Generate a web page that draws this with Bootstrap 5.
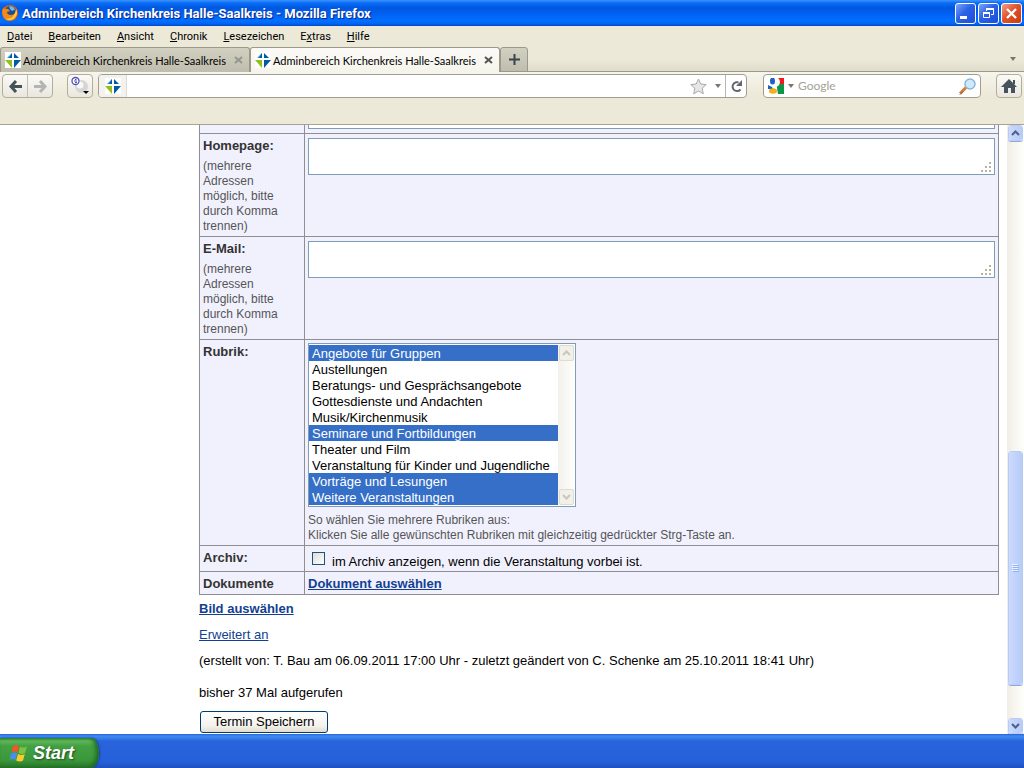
<!DOCTYPE html>
<html lang="de">
<head>
<meta charset="utf-8">
<meta name="viewport" content="width=device-width, initial-scale=1">
<title>Adminbereich Kirchenkreis Halle-Saalkreis</title>
<link href="https://cdn.jsdelivr.net/npm/bootstrap@5.3.0/dist/css/bootstrap.min.css" rel="stylesheet">
<style>
  :root { --chrome: #ece9d8; --line: #a5a391; --cell: #8e8e95; --field: #7f9db9; }
  body { font-family: "Liberation Sans", Arial, sans-serif; font-size: 13px; line-height: 16px; color: #000; background: #fff; }
  button { padding: 0; border: 0; background: none; }
  svg { display: block; flex: none; }
  .ui-text { font-family: Lato, Tahoma, sans-serif; font-size: 11px; }

  .title-bar { height: 26px; padding: 0 2px; background: linear-gradient(#3c94ff 0, #0a6cf7 3px, #0058e0 8px, #0061f5 14px, #0070ff 21px, #0064f0 24px, #0043c4 26px); }
  .title-text { padding-top: 1px; font-family: Roboto, "Trebuchet MS", sans-serif; font-size: 13px; font-weight: 700; color: #fff; text-shadow: 1px 1px 1px #0a1f8a; }
  .win-btns { gap: 2px; }
  .win-btn { width: 21px; height: 21px; border: 1px solid #fff; border-radius: 3px; background: linear-gradient(135deg, #7da4f7, #2a62e6 45%, #1d4fd8); }
  .win-btn.win-close { background: linear-gradient(135deg, #f0a08a, #e0532c 45%, #c93a10); }

  .menu-bar { height: 21px; padding-left: 7px; gap: 16px; background: var(--chrome); font-family: Roboto, Tahoma, sans-serif; }
  .menu-bar button { color: #000; }

  .tab-row { height: 25px; background: linear-gradient(#ece9d8 12px, #dfdccb); border-bottom: 1px solid #9b9987; }
  .tab-item { width: 250px; height: 25px; padding: 0 6px 0 4px; gap: 2px; border: 1px solid #9b9987; border-bottom: 0; border-radius: 3px 3px 0 0; background: linear-gradient(#d2d0c1, #bfbdae); color: #000; }
  .tab-item.current { background: linear-gradient(#fbfaf7, #f5f4ec); }
  .tab-label { padding-top: 2px; }
  .tab-add { width: 28px; height: 25px; border: 1px solid #9b9987; border-radius: 3px 3px 0 0; background: linear-gradient(#d2d0c1, #bfbdae); }

  .tool-bar { height: 53px; padding: 2px 2px 0; background: linear-gradient(#f7f5ec, #ece9d8 24px); border-bottom: 1px solid var(--line); }
  .tool-box { height: 24px; border: 1px solid #b1aea0; border-radius: 4px; background: linear-gradient(#fbfaf7, #e9e7dd); overflow: hidden; }
  .tool-box button { height: 22px; }
  .tool-box.field-box { background: #fff; border-color: #a09e92; }
  .tool-box input { min-width: 0; border: 0; outline: 0; padding: 0; background: none; font-size: 12px; }
  .tool-box input::placeholder { color: #a5a293; opacity: 1; }
  .nav-pair { width: 51px; }
  .helper-box { margin: 0 5px 0 14px; }
  .nav-pair button + button { border-left: 1px solid #c3c0b3; }
  .site-id { width: 28px; height: 22px; background: #f3f2ee; border-right: 1px solid #dddbd2; }
  .reload-btn { width: 21px; border-left: 1px solid #b9b7ac; }
  .search-box { width: 218px; }
  .home-box { margin-left: 15px; }
  .lens-box { width: 26px; }

  .page-pane { padding: 0 8px 0 199px; overflow: hidden; }
  .form-grid { width: 100%; border-collapse: collapse; }
  .form-grid th, .form-grid td { border: 1px solid var(--cell); background: #f1f1fe; padding: 3px 3px 2px; vertical-align: top; font-weight: 400; }
  .form-grid th { width: 105px; color: #555; font-size: 12px; line-height: 15px; }
  .form-grid tr:first-child > * { border-top: 0; padding-top: 0; height: 8px; }
  .form-grid tr:first-child > td { padding-bottom: 4px; }
  .field-name { display: block; font-size: 13px; line-height: 16px; font-weight: 700; color: #333; }
  .hint { font-size: 12px; line-height: 15px; color: #555; padding-top: 5px; }
  .list-wrap + .hint { padding-top: 6px; }
  .form-grid .last-rows > * { padding: 4px 3px 2px; }
  .text-area { display: block; width: 100%; height: 37px; border: 1px solid var(--field); background: #fff; resize: none; overflow: hidden; outline: 0; padding: 2px; }
  .text-area.cut { height: 4px; border-top: 0; padding: 0; }
  .grip { position: absolute; right: 4px; bottom: 3px; }
  .list-wrap { width: 268px; height: 164px; border: 1px solid var(--field); background: #fff; padding: 1px 0; }
  .list-wrap select { display: block; width: 249px; height: 160px; border: 0; padding: 0; outline: 0; overflow: hidden; font-size: 13px; line-height: 16px; color: #000; background: #fff; scrollbar-width: none; border-radius: 0; }
  .list-wrap option { height: 16px; min-height: 16px; line-height: 15px; padding: 1px 3px 0; }
  .list-wrap option:checked { background: #316ac5 linear-gradient(#356fc8, #356fc8); color: #fff; -webkit-text-fill-color: #fff; }
  .list-bar { width: 17px; background: linear-gradient(90deg, #f3f1ec, #fefefb); }
  .list-bar span { height: 16px; margin: 0 1px; border: 1px solid #dedbd0; border-radius: 2px; background: #f1f0e9; }
  .tick-box { appearance: none; width: 13px; height: 13px; margin: 2px 7px 0 4px; border: 1px solid #1c5180; background: linear-gradient(135deg, #dcdcd7, #fff); }
  .tick-row { height: 19px; }
  a { color: #123f92; }
  .link-strong { font-weight: 700; }
  .after-form { padding-top: 6px; }
  .after-form p { margin: 0 0 10px; }
  .after-form .stamp { margin-bottom: 16px; }
  .save-btn { display: block; height: 22px; width: 128px; margin-left: 1px; border: 1px solid #003c74; border-radius: 3px; background: linear-gradient(#fff, #f3f2ec 70%, #e0dccf); font-size: 13px; }

  .scroll-col { width: 17px; background: linear-gradient(90deg, #f0eee6, #fefefb); padding: 0 1px; }
  .scroll-col button, .scroll-thumb { border: 1px solid #fff; outline: 1px solid #b9cbf3; outline-offset: -1px; border-radius: 3px; background: linear-gradient(90deg, #cbdafd, #b7cbfa); box-shadow: 0 1px 0 #8fa9dc; }
  .scroll-col button { height: 16px; }
  .track-before { flex: 311 0 0; }
  .scroll-thumb { flex: 233 0 0; }
  .track-after { flex: 33 0 0; }

  .task-bar { height: 34px; background: linear-gradient(#2560d8 0, #3f8cee 2px, #3a80ea 4px, #2a64dc 7px, #2560da 28px, #1e4fbd); }
  .start-btn { width: 99px; height: 30px; padding-left: 9px; border-radius: 0 8px 8px 0 / 0 15px 15px 0; background: linear-gradient(#2f8a2f 0, #5fb85c 3px, #43a043 8px, #3a983a 22px, #2c7a2c); box-shadow: inset -3px -1px 4px #1f6a22, 1px 0 2px #17409e; font-family: "Liberation Sans", sans-serif; font-size: 18px; font-weight: 700; font-style: italic; color: #fff; text-shadow: 1px 1px 2px #1d4a1d; }
</style>
</head>
<body class="d-flex flex-column vh-100 overflow-hidden">
<svg width="0" height="0" class="position-absolute" aria-hidden="true">
  <symbol id="site-mark" viewBox="0 0 16 16">
    <rect width="16" height="16" fill="#fff"/>
    <path d="M7 1v5H2z" fill="#3a9ad0"/><path d="M7 1v5H4z" fill="#005ba5"/>
    <path d="M9 1v5h5z" fill="#005ba5"/><path d="M0 8h7v8z" fill="#93c01f"/><path d="M9 8h7l-7 8z" fill="#005ba5"/>
  </symbol>
  <symbol id="drop" viewBox="0 0 6 4"><path d="M0 0h6L3 4z" fill="#77776f"/></symbol>
</svg>

<header class="title-bar d-flex align-items-center flex-shrink-0">
  <svg width="16" height="16" viewBox="0 0 16 16"><circle cx="8" cy="8" r="8" fill="#e2600b"/><circle cx="8.500" cy="6.500" r="5.500" fill="#1d4f94"/><path d="M7 1.500q4-1 6 3L10 6 8 4z" fill="#79b8e6"/><path d="M1 2q0 2 2 2 3-1 4 1l1 1-3 1q0 3 4 3 4 0 5-4 2 6-3 9-6 2-9-2-3-5-1-10z" fill="#f38a18"/><path d="M14 4q3 6-3 10-4 2-7 0 9 0 10-10z" fill="#ffd03c"/></svg>
  <span class="title-text ms-1 me-auto text-nowrap">Adminbereich Kirchenkreis Halle-Saalkreis - Mozilla Firefox</span>
  <div class="win-btns d-flex">
    <button class="win-btn" type="button" aria-label="Minimieren"><svg width="19" height="19"><path d="M4 12h7v3H4z" fill="#fff"/></svg></button>
    <button class="win-btn" type="button" aria-label="Verkleinern"><svg width="19" height="19" fill="none" stroke="#fff"><path d="M7.500 7V4.500h7v6H12M4.500 8.500h6v5h-6z"/><path d="M7 5h8M4 9h7" stroke-width="2"/></svg></button>
    <button class="win-btn win-close" type="button" aria-label="Schließen"><svg width="19" height="19"><path d="M5 5l9 9M14 5l-9 9" stroke="#fff" stroke-width="2.400"/></svg></button>
  </div>
</header>

<nav class="menu-bar ui-text d-flex align-items-center flex-shrink-0" aria-label="Menü">
  <button type="button"><u>D</u>atei</button><button type="button"><u>B</u>earbeiten</button><button type="button"><u>A</u>nsicht</button><button type="button"><u>C</u>hronik</button><button type="button"><u>L</u>esezeichen</button><button type="button">E<u>x</u>tras</button><button type="button"><u>H</u>ilfe</button>
</nav>

<div class="tab-row ui-text d-flex flex-shrink-0">
  <div class="tab-item d-flex align-items-center"><svg width="16" height="16"><use href="#site-mark"/></svg><span class="tab-label me-auto text-nowrap">Adminbereich Kirchenkreis Halle-Saalkreis</span><button type="button" aria-label="Tab schließen"><svg width="9" height="8"><path d="M1 1l7 6M8 1L1 7" stroke="#96958b" stroke-width="2"/></svg></button></div>
  <div class="tab-item current d-flex align-items-center"><svg width="16" height="16"><use href="#site-mark"/></svg><span class="tab-label me-auto text-nowrap">Adminbereich Kirchenkreis Halle-Saalkreis</span><button type="button" aria-label="Tab schließen"><svg width="9" height="8"><path d="M1 1l7 6M8 1L1 7" stroke="#55554f" stroke-width="2"/></svg></button></div>
  <button class="tab-add d-flex align-items-center justify-content-center" type="button" aria-label="Neuer Tab"><svg width="11" height="11"><path d="M5.500 0v11M0 5.500h11" stroke="#3a444c" stroke-width="2"/></svg></button>
  <button class="ms-auto me-2 align-self-center" type="button" aria-label="Alle Tabs"><svg width="6" height="4"><use href="#drop"/></svg></button>
</div>

<div class="tool-bar ui-text d-flex align-items-start flex-shrink-0">
  <div class="tool-box nav-pair d-flex">
    <button class="flex-fill d-flex align-items-center justify-content-center" type="button" aria-label="Zurück"><svg width="13" height="13" fill="none" stroke="#46515a" stroke-width="3"><path d="M7 1L2 6.500 7 12M2 6.500h11"/></svg></button>
    <button class="flex-fill d-flex align-items-center justify-content-center" type="button" aria-label="Vor"><svg width="13" height="13" fill="none" stroke="#b3b5b3" stroke-width="3"><path d="M6 1l5 5.500L6 12M11 6.500H0"/></svg></button>
  </div>
  <div class="tool-box helper-box"><button class="d-flex align-items-center justify-content-center" type="button" aria-label="Werkzeug"><svg width="24" height="22"><circle cx="13.500" cy="11.500" r="6.500" fill="#d5d5d6"/><circle cx="12" cy="10" r="3.500" fill="#f8f8f8"/><circle cx="7.500" cy="6" r="3.500" fill="#fff" stroke="#5450b8" stroke-width="1.300"/><path d="M6 6h3M7 4.500h1.500M7 7.500h2" stroke="#5450b8"/><path d="M15 16h6l-3 3z" fill="#000"/></svg></button></div>
  <div class="tool-box field-box d-flex flex-grow-1 align-items-center">
    <div class="site-id d-flex align-items-center justify-content-center flex-shrink-0"><svg width="16" height="16"><use href="#site-mark"/></svg></div>
    <input class="flex-grow-1" type="text" aria-label="Adresse">
    <button class="d-flex align-items-center me-1" type="button" aria-label="Lesezeichen"><svg width="17" height="17" viewBox="0 0 17 17"><path d="M8.500 1l2.300 5 5.400.6-4 3.600 1.100 5.600-4.800-2.800-4.800 2.800 1.100-5.600-4-3.600 5.400-.6z" fill="#e6e6e6" stroke="#a8a8a8"/></svg></button>
    <button class="px-1 d-flex align-items-center" type="button" aria-label="Verlauf"><svg width="6" height="4"><use href="#drop"/></svg></button>
    <button class="reload-btn d-flex align-items-center justify-content-center" type="button" aria-label="Neu laden"><svg width="13" height="13"><path d="M8.500 2.200H6A4.500 4.500 0 1 0 10.500 9.500" fill="none" stroke="#62676a" stroke-width="2"/><path d="M12 0v6H6z" fill="#62676a"/></svg></button>
  </div>
  <div class="tool-box field-box search-box d-flex align-items-center ms-3">
    <button class="d-flex align-items-center ps-1 gap-1" type="button" aria-label="Suchmaschine"><svg width="16" height="16"><path d="M8 0h8v7H8z" fill="#ee1c1c"/><path d="M9 6h7v10H9z" fill="#0d9648"/><circle cx="7" cy="4" r="5" fill="#fff"/><path d="M0 5h5q5 0 4 5l1 6H0z" fill="#fff"/><ellipse cx="4.500" cy="3" rx="2.500" ry="3.500" fill="#1b62c8"/><path d="M0 7l4 2 1 2-5 0z" fill="#1b62c8"/><ellipse cx="5" cy="13" rx="4" ry="2.800" fill="#f5ad18"/></svg><svg width="6" height="4"><use href="#drop"/></svg></button>
    <input class="flex-grow-1 ms-1" type="text" placeholder="Google" aria-label="Suche">
    <button class="lens-box d-flex align-items-center justify-content-center" type="button" aria-label="Suchen"><svg width="17" height="17"><path d="M1 15.500L7 9.500" stroke="#d77a33" stroke-width="3"/><circle cx="11" cy="6" r="5" fill="#cfeafb" stroke="#8fb4dc" stroke-width="1.500"/><path d="M1 16.500l3-3" stroke="#6a594e" stroke-width="1"/></svg></button>
  </div>
  <div class="tool-box home-box"><button class="d-flex align-items-center justify-content-center" type="button" aria-label="Startseite"><svg width="24" height="22"><path d="M12 4l8 8h-2v6h-4v-5h-3v5H7v-6H4z" fill="#47525c"/><path d="M16 5h2v4h-2z" fill="#47525c"/></svg></button></div>
</div>

<div class="d-flex flex-grow-1 overflow-hidden">
  <main class="page-pane flex-grow-1">
    <form onsubmit="return false">
      <table class="form-grid">
        <tr><th></th><td><textarea class="text-area cut" aria-label="Weitere Angaben"></textarea></td></tr>
        <tr>
          <th scope="row" class="pt-1"><label class="field-name" for="homepage">Homepage:</label><div class="hint">(mehrere Adressen möglich, bitte durch Komma trennen)</div></th>
          <td class="pt-1"><div class="position-relative"><textarea class="text-area" id="homepage"></textarea><svg class="grip" width="10" height="10" fill="#b8b49f"><path d="M8 0h2v2H8zM4 4h2v2H4zM8 4h2v2H8zM0 8h2v2H0zM4 8h2v2H4zM8 8h2v2H8z"/></svg></div></td>
        </tr>
        <tr>
          <th scope="row" class="pt-1"><label class="field-name" for="email">E-Mail:</label><div class="hint">(mehrere Adressen möglich, bitte durch Komma trennen)</div></th>
          <td class="pt-1"><div class="position-relative"><textarea class="text-area" id="email"></textarea><svg class="grip" width="10" height="10" fill="#b8b49f"><path d="M8 0h2v2H8zM4 4h2v2H4zM8 4h2v2H8zM0 8h2v2H0zM4 8h2v2H4zM8 8h2v2H8z"/></svg></div></td>
        </tr>
        <tr>
          <th scope="row" class="pt-1"><label class="field-name" for="rubrik">Rubrik:</label></th>
          <td>
            <div class="list-wrap d-flex">
              <select id="rubrik" multiple size="10">
                <option selected>Angebote für Gruppen</option>
                <option>Austellungen</option>
                <option>Beratungs- und Gesprächsangebote</option>
                <option>Gottesdienste und Andachten</option>
                <option>Musik/Kirchenmusik</option>
                <option selected>Seminare und Fortbildungen</option>
                <option>Theater und Film</option>
                <option>Veranstaltung für Kinder und Jugendliche</option>
                <option selected>Vorträge und Lesungen</option>
                <option selected>Weitere Veranstaltungen</option>
              </select>
              <div class="list-bar d-flex flex-column justify-content-between">
                <span class="d-flex align-items-center justify-content-center"><svg width="9" height="6"><path d="M1 5l3.500-3.500L8 5" fill="none" stroke="#c9c7ba" stroke-width="2"/></svg></span>
                <span class="d-flex align-items-center justify-content-center"><svg width="9" height="6"><path d="M1 1l3.500 3.500L8 1" fill="none" stroke="#c9c7ba" stroke-width="2"/></svg></span>
              </div>
            </div>
            <div class="hint">So wählen Sie mehrere Rubriken aus:<br>Klicken Sie alle gewünschten Rubriken mit gleichzeitig gedrückter Strg-Taste an.</div>
          </td>
        </tr>
        <tr class="last-rows">
          <th scope="row"><span class="field-name">Archiv:</span></th>
          <td><div class="tick-row d-flex align-items-start"><input class="tick-box" type="checkbox" id="archiv"><label class="pt-1" for="archiv">im Archiv anzeigen, wenn die Veranstaltung vorbei ist.</label></div></td>
        </tr>
        <tr class="last-rows">
          <th scope="row"><span class="field-name">Dokumente</span></th>
          <td><a class="link-strong" href="#">Dokument auswählen</a></td>
        </tr>
      </table>
      <div class="after-form">
        <p><a class="link-strong" href="#">Bild auswählen</a></p>
        <p><a href="#">Erweitert an</a></p>
        <p class="stamp">(erstellt von: T. Bau am 06.09.2011 17:00 Uhr - zuletzt geändert von C. Schenke am 25.10.2011 18:41 Uhr)</p>
        <p>bisher 37 Mal aufgerufen</p>
        <button class="save-btn" type="submit">Termin Speichern</button>
      </div>
    </form>
  </main>
  <div class="scroll-col d-flex flex-column flex-shrink-0" aria-hidden="true">
    <button class="d-flex align-items-center justify-content-center" type="button" tabindex="-1"><svg width="9" height="6"><path d="M1 5l3.500-3.500L8 5" fill="none" stroke="#4d6185" stroke-width="2"/></svg></button>
    <div class="track-before"></div>
    <div class="scroll-thumb d-flex align-items-center justify-content-center"><svg width="7" height="8"><path d="M0 .5h6M0 2.500h6M0 4.500h6M0 6.500h6" stroke="#eef4fe"/><path d="M1 1.500h6M1 3.500h6M1 5.500h6M1 7.500h6" stroke="#8cb0f8"/></svg></div>
    <div class="track-after"></div>
    <button class="d-flex align-items-center justify-content-center" type="button" tabindex="-1"><svg width="9" height="6"><path d="M1 1l3.500 3.500L8 1" fill="none" stroke="#4d6185" stroke-width="2"/></svg></button>
  </div>
</div>

<footer class="task-bar d-flex align-items-end flex-shrink-0">
  <button class="start-btn d-flex align-items-center gap-1" type="button"><svg width="20" height="20"><path d="M4 3q3-2 6 0L8.500 9.500q-3-2-6 0z" fill="#f0562a"/><path d="M11 3.500q3 2 7 0L16 10q-3 2-6.500 0z" fill="#7cc242"/><path d="M2.200 10.500q3-2 6 0L6.500 17q-3-2-6 0z" fill="#4a8df0"/><path d="M9 11q3.500 2 6.800 0L14 17.500q-3 2-6.800 0z" fill="#fbcb2e"/></svg>Start</button>
</footer>
<script src="https://cdn.jsdelivr.net/npm/bootstrap@5.3.0/dist/js/bootstrap.bundle.min.js"></script>
</body>
</html>
